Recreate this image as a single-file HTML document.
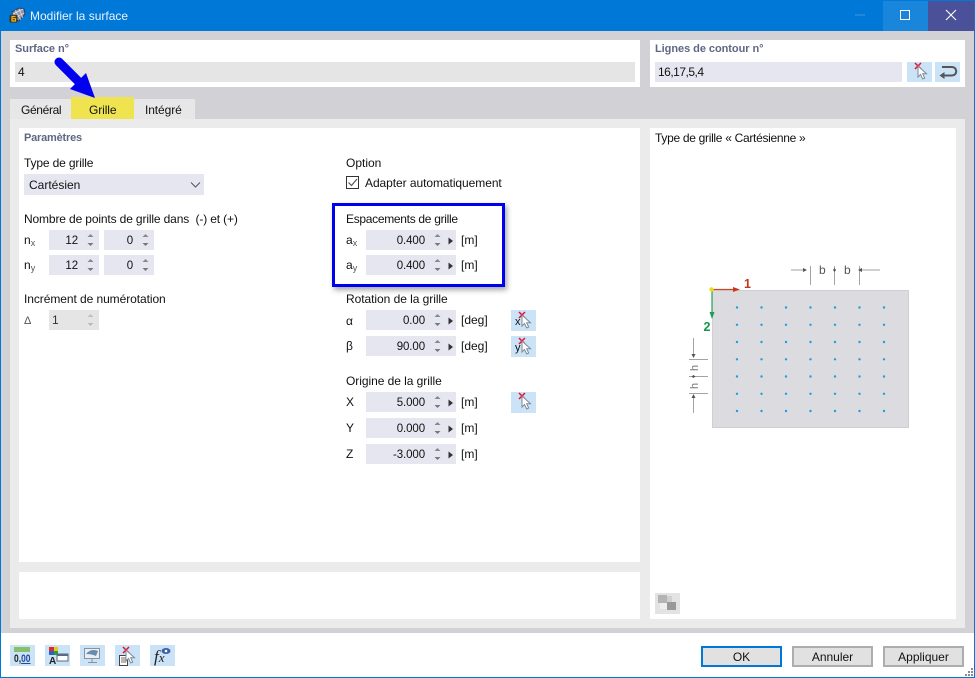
<!DOCTYPE html>
<html lang="fr"><head><meta charset="utf-8"><title>Modifier la surface</title>
<style>
html,body{margin:0;padding:0;background:#fff}
#w{position:relative;width:975px;height:678px;overflow:hidden;background:#fff;font:12px/14px "Liberation Sans",sans-serif;letter-spacing:0;color:#111}
#w div,#w span.a{position:absolute}
.t{white-space:nowrap}
.h{color:#5f6785;font-weight:bold;font-size:11px;letter-spacing:-.05px}
.f{background:#e6e6f0;height:20px;line-height:21px}
.v{position:absolute;top:1px;text-align:right;white-space:nowrap;font-size:11.5px;letter-spacing:-.1px}
.b{background:#cbe3f7;width:25px;height:21px}
.btn{background:#e1e1e1;border:2px solid #adadad;box-sizing:border-box;height:21px;width:81px;text-align:center;line-height:19px;top:646px}
svg{position:absolute;left:0;top:0;overflow:visible}
sub{font-size:9px;line-height:0;vertical-align:-2px;color:#555}
</style></head><body><div id="w">

<div style="left:0;top:0;width:975px;height:678px;background:#0078d7"></div>
<div style="left:1px;top:31px;width:973px;height:602px;background:#d1d1d6"></div>
<div style="left:1px;top:633px;width:973px;height:44px;background:#fff"></div>

<!-- title bar -->
<div style="left:928px;top:1px;width:46px;height:30px;background:#4a5199"></div>
<div style="left:883px;top:1px;width:45px;height:30px;background:#1a86db"></div>
<div class="t" style="left:30px;top:9px;color:#e8f2fb">Modifier la surface</div>
<svg width="975" height="31">
<path d="M855 15h10" stroke="#3f98df" stroke-width="1"/>
<rect x="900.5" y="10.5" width="9" height="9" fill="none" stroke="#fff"/>
<path d="M946 10l10 10M956 10l-10 10" stroke="#fff" stroke-width="1.1"/>
<path d="M12 12l7-4 5 1 1 5-6 7-6-2z" fill="#8d93a8" stroke="#2b2f45" stroke-width=".8"/>
<path d="M15 10l6 10M19 9l4 9M13 14l10-5M15 18l9-5" stroke="#e3e6ee" stroke-width=".7"/>
<rect x="9.500" y="15" width="8" height="7.500" rx="1" fill="#3a3420"/>
<path d="M15.500 16.500h-3.500v4.500h3.500v-2.300h-3.500" fill="none" stroke="#f2b619" stroke-width="1.200"/>
</svg>

<!-- top panels -->
<div style="left:10px;top:40px;width:630px;height:47px;background:#fff"></div>
<div class="t h" style="left:15px;top:42px">Surface n°</div>
<div class="f" style="left:15px;top:62px;width:620px;background:#e5e5e5"><span class="a t" style="left:3px">4</span></div>
<div style="left:650px;top:40px;width:315px;height:47px;background:#fff"></div>
<div class="t h" style="left:655px;top:42px">Lignes de contour n°</div>
<div class="f" style="left:655px;top:62px;width:247px"><span class="a t" style="left:3px;letter-spacing:-.5px">16,17,5,4</span></div>
<div class="b" style="left:907px;top:62px;height:20px"></div>
<div class="b" style="left:935px;top:62px;height:20px"></div>

<!-- tabs -->
<div style="left:10px;top:99px;width:185px;height:21px;background:#e7e7e7"></div>
<div style="left:71px;top:97px;width:63px;height:23px;background:#efe44f"></div>
<div class="t" style="left:21px;top:103px;letter-spacing:-.35px">Général</div>
<div class="t" style="left:89px;top:103px;letter-spacing:-.1px">Grille</div>
<div class="t" style="left:145px;top:103px;letter-spacing:-.1px">Intégré</div>

<!-- main panel -->
<div style="left:10px;top:119px;width:955px;height:509px;background:#ebebeb"></div>
<div style="left:19px;top:128px;width:621px;height:434px;background:#fff"></div>
<div style="left:19px;top:572px;width:621px;height:47px;background:#fff"></div>
<div style="left:650px;top:128px;width:306px;height:491px;background:#fff"></div>

<div class="t h" style="left:24px;top:131px;letter-spacing:-.2px">Paramètres</div>
<div class="t" style="left:24px;top:156px;letter-spacing:-.15px">Type de grille</div>
<div class="f" style="left:24px;top:174px;width:180px;height:21px;line-height:22px"><span class="a t" style="left:5px">Cartésien</span></div>
<div class="t" style="left:24px;top:212px;letter-spacing:-.14px">Nombre de points de grille dans&nbsp; (-) et (+)</div>
<div class="t" style="left:24px;top:233px">n<sub>x</sub></div>
<div class="t" style="left:24px;top:258px">n<sub>y</sub></div>
<div class="f" style="left:49px;top:230px;width:50px"><span class="v" style="right:21px">12</span></div>
<div class="f" style="left:104px;top:230px;width:50px"><span class="v" style="right:21px">0</span></div>
<div class="f" style="left:49px;top:255px;width:50px"><span class="v" style="right:21px">12</span></div>
<div class="f" style="left:104px;top:255px;width:50px"><span class="v" style="right:21px">0</span></div>
<div class="t" style="left:24px;top:292px;letter-spacing:-.07px">Incrément de numérotation</div>
<div class="t" style="left:24px;top:314px;font-size:11px;color:#555">Δ</div>
<div class="f" style="left:49px;top:310px;width:50px;background:#e5e5e5"><span class="a t" style="left:3px;color:#333">1</span></div>

<div class="t" style="left:346px;top:156px">Option</div>
<div class="t" style="left:365px;top:176px;letter-spacing:-.06px">Adapter automatiquement</div>
<div class="t" style="left:346px;top:212px;letter-spacing:-.3px">Espacements de grille</div>
<div class="t" style="left:346px;top:233px">a<sub>x</sub></div>
<div class="t" style="left:346px;top:258px">a<sub>y</sub></div>
<div class="t" style="left:346px;top:292px;letter-spacing:-.05px">Rotation de la grille</div>
<div class="t" style="left:346px;top:314px">α</div>
<div class="t" style="left:346px;top:339px">β</div>
<div class="t" style="left:346px;top:374px;letter-spacing:-.05px">Origine de la grille</div>
<div class="t" style="left:346px;top:395px">X</div>
<div class="t" style="left:346px;top:421px">Y</div>
<div class="t" style="left:346px;top:447px">Z</div>

<div class="f" style="left:366px;top:230px;width:90px"><span class="v" style="right:31px">0.400</span></div>
<div class="f" style="left:366px;top:255px;width:90px"><span class="v" style="right:31px">0.400</span></div>
<div class="f" style="left:366px;top:310px;width:90px"><span class="v" style="right:31px">0.00</span></div>
<div class="f" style="left:366px;top:336px;width:90px"><span class="v" style="right:31px">90.00</span></div>
<div class="f" style="left:366px;top:392px;width:90px"><span class="v" style="right:31px">5.000</span></div>
<div class="f" style="left:366px;top:418px;width:90px"><span class="v" style="right:31px">0.000</span></div>
<div class="f" style="left:366px;top:444px;width:90px"><span class="v" style="right:31px">-3.000</span></div>
<div class="t" style="left:461px;top:233px">[m]</div>
<div class="t" style="left:461px;top:258px">[m]</div>
<div class="t" style="left:461px;top:313px">[deg]</div>
<div class="t" style="left:461px;top:339px">[deg]</div>
<div class="t" style="left:461px;top:395px">[m]</div>
<div class="t" style="left:461px;top:421px">[m]</div>
<div class="t" style="left:461px;top:447px">[m]</div>

<div class="b" style="left:511px;top:310px"></div>
<div class="b" style="left:511px;top:336px"></div>
<div class="b" style="left:511px;top:392px"></div>
<div class="t" style="left:515px;top:315px;font-size:11px">x</div>
<div class="t" style="left:515px;top:341px;font-size:11px">y</div>

<div class="t" style="left:655px;top:131px;letter-spacing:-.3px">Type de grille « Cartésienne »</div>

<!-- blue frame -->
<div style="left:332px;top:203px;width:173px;height:84px;box-sizing:border-box;border:3px solid #0000f0;box-shadow:2px 3px 5px rgba(60,60,60,.45)"></div>

<!-- bottom -->
<div style="left:10px;top:645px;width:25px;height:21px;background:#cbe3f7"></div>
<div style="left:45px;top:645px;width:25px;height:21px;background:#cbe3f7"></div>
<div style="left:80px;top:645px;width:25px;height:21px;background:#cbe3f7"></div>
<div style="left:115px;top:645px;width:25px;height:21px;background:#cbe3f7"></div>
<div style="left:150px;top:645px;width:25px;height:21px;background:#cbe3f7"></div>
<div class="t" style="left:14px;top:653px;font-size:11px;font-weight:bold;line-height:12px;color:#222;transform:scaleX(.77);transform-origin:left top">0,<span style="color:#234a9c;text-decoration:underline">00</span></div>
<div class="t" style="left:154px;top:648px;font:italic 17px/18px 'Liberation Serif',serif;color:#222">f<span style="font-size:13px">x</span></div>
<div class="btn" style="left:701px;border-color:#0078d7">OK</div>
<div class="btn" style="left:792px">Annuler</div>
<div class="btn" style="left:883px">Appliquer</div>

<!-- vector art -->
<svg width="975" height="678">
<defs>
<g id="sp"><path d="M-3 3l3-3 3 3z" fill="#888"/><path d="M-3 9h6l-3 3z" fill="#777"/></g>
<g id="sp2"><use href="#sp"/><path d="M11 3.500l4.500 3.500-4.500 3.500z" fill="#333"/></g>
<g id="cur"><path d="M3 1l6 6M9 1l-6 6" stroke="#e8112d" stroke-width="1.500"/><path d="M6 4v11l2.500-2.500 2.200 4.500 2-1-2-4.200h3.800z" fill="#fff" stroke="#7d8a96" stroke-width="1"/></g>
</defs>
<!-- spinners -->
<use href="#sp" x="90.5" y="234"/><use href="#sp" x="145.5" y="234"/>
<use href="#sp" x="90.5" y="259"/><use href="#sp" x="145.5" y="259"/>
<g opacity=".4"><use href="#sp" x="90.5" y="314"/></g>
<use href="#sp2" x="437.5" y="234"/><use href="#sp2" x="437.5" y="259"/>
<use href="#sp2" x="437.5" y="314"/><use href="#sp2" x="437.5" y="340"/>
<use href="#sp2" x="437.5" y="396"/><use href="#sp2" x="437.5" y="422"/><use href="#sp2" x="437.5" y="448"/>
<!-- combo chevron -->
<path d="M191 182.500l4.500 4.500 4.500-4.500" fill="none" stroke="#555" stroke-width="1"/>
<!-- checkbox -->
<rect x="346.500" y="176.500" width="12" height="12" fill="#fff" stroke="#333"/>
<path d="M348.500 182.500l3 3 5.500-6.500" fill="none" stroke="#555" stroke-width="1.200"/>
<!-- cursor buttons -->
<use href="#cur" x="912" y="62"/>
<use href="#cur" x="516" y="311"/><use href="#cur" x="516" y="337"/><use href="#cur" x="516" y="392"/>
<path d="M942 67h10a4.250 4.250 0 0 1 0 8.500h-9" fill="none" stroke="#555" stroke-width="2"/>
<path d="M939.500 75.500l5-3.500v7z" fill="#555"/>
<!-- blue arrow -->
<path d="M59 62L80 83" stroke="#0000ee" stroke-width="9" stroke-linecap="round"/>
<path d="M70 89L86 73 95 98z" fill="#0000ee"/>
<!-- diagram -->
<rect x="712.500" y="290.500" width="196" height="137" fill="#dcdce0" stroke="#cfcfd3"/>
<g fill="#1c9fe0">
<g id="r"><circle cx="737" cy="307.500" r="1.200"/><circle cx="761.500" cy="307.500" r="1.200"/><circle cx="786" cy="307.500" r="1.200"/><circle cx="810.500" cy="307.500" r="1.200"/><circle cx="835" cy="307.500" r="1.200"/><circle cx="859.500" cy="307.500" r="1.200"/><circle cx="884" cy="307.500" r="1.200"/></g>
<use href="#r" y="17.300"/><use href="#r" y="34.500"/><use href="#r" y="51.800"/><use href="#r" y="69"/><use href="#r" y="86.300"/><use href="#r" y="103.500"/>
</g>
<path d="M712 289.500h26" stroke="#c8492a" stroke-width="1.300"/><path d="M733 287l7 2.500-7 2.500z" fill="#c8381a"/>
<path d="M712 291v25" stroke="#35a868" stroke-width="1.300"/><path d="M709.500 312l2.500 7 2.500-7z" fill="#1e9e50"/>
<circle cx="711.500" cy="289.500" r="2.200" fill="#f5d90f"/>
<text x="744" y="288" font-family="Liberation Sans" font-size="12.500" font-weight="bold" fill="#c0391c">1</text>
<text x="703.500" y="331" font-family="Liberation Sans" font-size="12.500" font-weight="bold" fill="#12984a">2</text>
<g stroke="#a2a2aa" stroke-width="1" fill="none">
<path d="M791 270h14M810.500 266v19M834.500 266v19M859.500 266v19M860 270h20"/>
<path d="M689 359.500h19M689 376.500h19M689 393.500h19M693.500 338v18M693.500 396v17"/>
</g>
<g fill="#555">
<path d="M803 268l4 2-4 2zM862 268l-4 2 4 2zM833 270l1.500-2 1.500 2-1.500 2z"/>
<path d="M691.500 354l2 4 2-4zM691.500 398l2-4 2 4zM691.500 376.500l2-1.500 2 1.500-2 1.500z"/>
</g>
<text x="819" y="274" font-family="Liberation Sans" font-size="12" fill="#555">b</text>
<text x="844" y="274" font-family="Liberation Sans" font-size="12" fill="#555">b</text>
<text transform="translate(698 371) rotate(-90)" font-family="Liberation Sans" font-size="11" fill="#777">h</text>
<text transform="translate(698 389) rotate(-90)" font-family="Liberation Sans" font-size="11" fill="#777">h</text>
<!-- preview button -->
<rect x="655" y="593" width="25" height="21" fill="#e3e3e3"/>
<rect x="658" y="595" width="9" height="8" fill="#b4b4b4"/><rect x="667" y="602" width="9" height="8" fill="#999"/><rect x="660" y="603" width="7" height="6" fill="#eee"/><rect x="667" y="596" width="5" height="6" fill="#d0d0d0"/>
<!-- footer icons -->
<rect x="14" y="647" width="16" height="5" fill="#86c06c"/>
<rect x="49" y="647" width="5" height="4" fill="#e02a2a"/><rect x="54" y="647" width="4" height="4" fill="#e8c818"/><rect x="49" y="651" width="5" height="4" fill="#2a60c8"/><rect x="54" y="651" width="4" height="4" fill="#28a040"/>
<rect x="57" y="654" width="11" height="7" fill="#fff" stroke="#5a6a80"/><rect x="57" y="654" width="11" height="2" fill="#5a6a80"/>
<text x="49" y="664" font-family="Liberation Sans" font-size="10" font-weight="bold" fill="#222">A</text>
<rect x="84.500" y="648.500" width="15" height="10" fill="#e8eef4" stroke="#8a929c"/><path d="M86 654q5-6 12-3l-2 5q-4-2-10-2z" fill="#6a8bb0"/><path d="M92 659v3M88 662.500h9" stroke="#8a929c"/>
<rect x="119.500" y="655.500" width="8" height="10" fill="#fff" stroke="#444"/><path d="M121 658h5M121 660h5M121 662h5" stroke="#444" stroke-width=".8"/>
<use href="#cur" x="120" y="646"/>
<ellipse cx="166" cy="651" rx="4.500" ry="3" fill="#3d5fa8"/><circle cx="166" cy="651" r="1.300" fill="#fff"/>
<g fill="#8b8b93"><rect x="971" y="668" width="2" height="2"/><rect x="968" y="671" width="2" height="2"/><rect x="971" y="671" width="2" height="2"/><rect x="965" y="674" width="2" height="2"/><rect x="968" y="674" width="2" height="2"/><rect x="971" y="674" width="2" height="2"/></g>
</svg>
</div></body></html>
